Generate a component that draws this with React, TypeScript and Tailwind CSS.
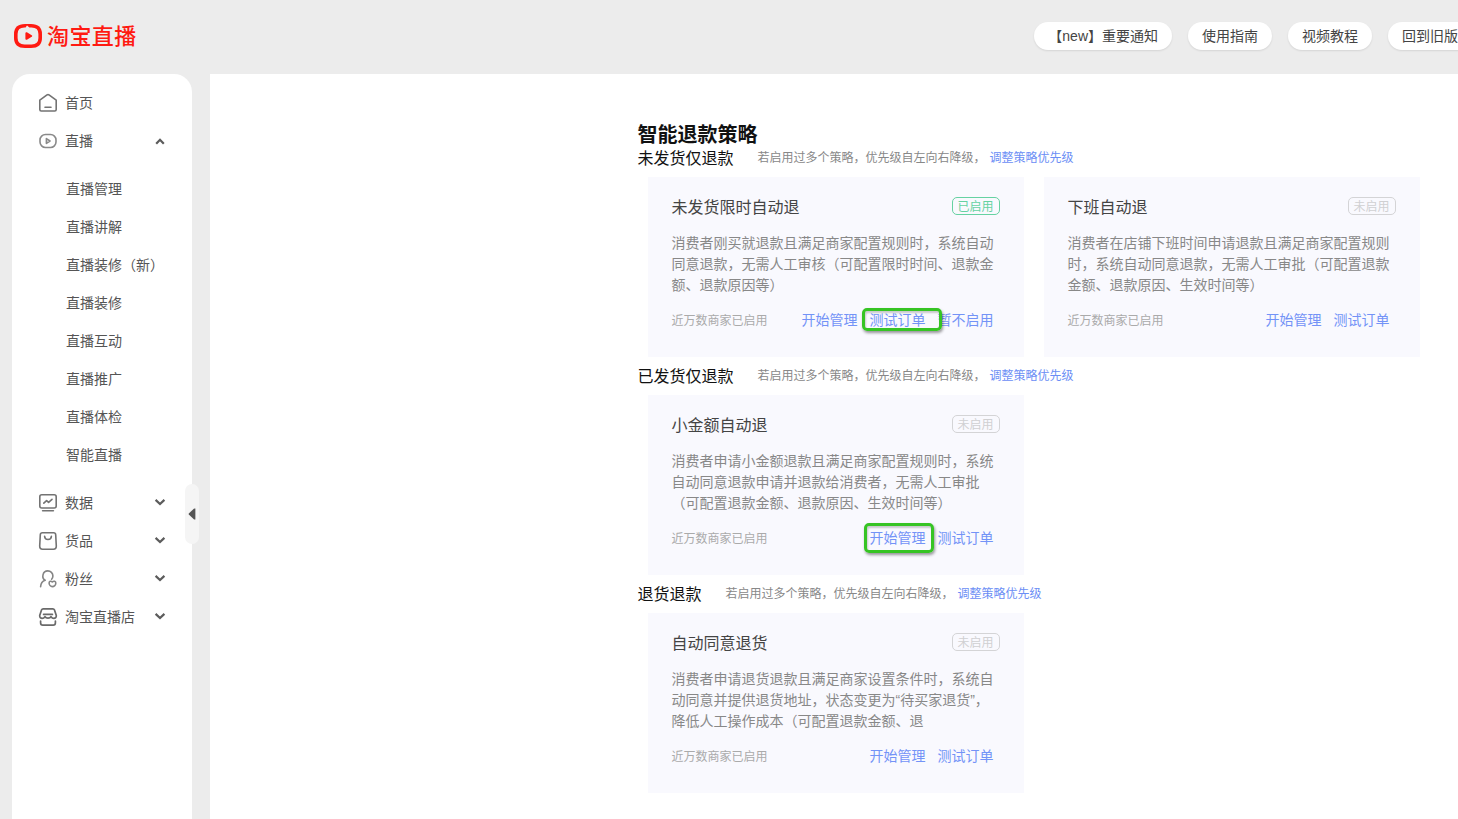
import type { ReactNode } from "react";

const stroke = {
  width: 20,
  height: 20,
  viewBox: "0 0 20 20",
  fill: "none",
  stroke: "#737373",
  strokeWidth: 1.6,
  strokeLinecap: "round" as const,
  strokeLinejoin: "round" as const,
};

const HomeIcon = () => (
  <svg {...stroke}>
    <path d="M1.8 7.2 L9 1.9 Q10 1.3 11 1.9 L18.2 7.2 V16.6 Q18.2 18 16.8 18 H3.2 Q1.8 18 1.8 16.6 Z" />
    <path d="M7 14.2 H13" />
  </svg>
);

const LiveIcon = () => (
  <svg {...stroke} stroke="#8a8a8a">
    <rect x="2" y="3.5" width="16" height="13" rx="5.5" />
    <path d="M8.4 7.6 L12 10 L8.4 12.4 Z" />
  </svg>
);

const DataIcon = () => (
  <svg {...stroke}>
    <rect x="1.8" y="1.8" width="16.4" height="13.2" rx="2" />
    <path d="M5.8 10.2 L8.6 7.6 L10.6 9.4 L14 6.4" />
    <path d="M4.6 17.7 H15.4" />
  </svg>
);

const GoodsIcon = () => (
  <svg {...stroke}>
    <path d="M4.4 1.8 H15.6 Q17.6 1.8 17.7 3.8 L18.3 15 Q18.4 18.2 15.4 18.2 H4.6 Q1.6 18.2 1.7 15 L2.3 3.8 Q2.4 1.8 4.4 1.8 Z" />
    <path d="M6.6 5.2 C6.8 9.6 13.2 9.6 13.4 5.2" />
  </svg>
);

const FansIcon = () => (
  <svg {...stroke} stroke="#858585">
    <path d="M2.6 17.8 C2.8 14 4.6 12 7.2 11.2 C4.8 10 4.6 7.6 5 5.8 C5.6 3.2 7.8 1.9 9.8 1.9 C12.6 1.9 15 4.2 14.9 7 C14.9 8.4 14.4 9.4 13.6 10.2" />
    <path d="M14.3 13 C12.9 11.5 11.1 12.4 11.1 14.1 C11.1 16 12.7 17.6 14.3 17.6 C16.1 17.6 17.8 16 17.8 14.1 C17.8 12.4 15.8 11.5 14.3 13 Z" />
  </svg>
);

const ShopIcon = () => (
  <svg {...stroke} strokeWidth={1.7} stroke="#6a6a6a">
    <path d="M5.2 1.8 H14.8 Q16 1.8 16.4 2.8 L18.3 8.6 C18.4 10.4 17.4 11.4 15.8 11.4 C14.4 11.4 13.6 10.6 13 9.6 C12 11.6 8 11.6 7 9.6 C6.4 10.6 5.6 11.4 4.2 11.4 C2.6 11.4 1.6 10.4 1.7 8.6 L3.6 2.8 Q4 1.8 5.2 1.8 Z" />
    <path d="M5.6 7.4 H14.4" />
    <path d="M2.6 14 V15.8 Q2.6 18.2 4.8 18.2 H15.2 Q17.4 18.2 17.4 15.8 V14" />
  </svg>
);

const Arrow = ({ up }: { up?: boolean }) => (
  <svg width="12" height="12" viewBox="0 0 12 12" fill="none" stroke="#5c5c5c" strokeWidth="2.2">
    <path d={up ? "M2.2 8.8 L6 4.8 L9.8 8.8" : "M1.6 2.9 L6 7.1 L10.4 2.9"} />
  </svg>
);

const liveMenu = [
  "直播管理",
  "直播讲解",
  "直播装修（新）",
  "直播装修",
  "直播互动",
  "直播推广",
  "直播体检",
  "智能直播",
];

const bottomMenu = [
  { title: "数据", icon: <DataIcon /> },
  { title: "货品", icon: <GoodsIcon /> },
  { title: "粉丝", icon: <FansIcon /> },
  { title: "淘宝直播店", icon: <ShopIcon /> },
];

type Action = { text: string; mark?: string };
type CardData = { title: string; enabled?: boolean; desc: string[]; actions: Action[] };

const sections: { title: string; cards: CardData[] }[] = [
  {
    title: "未发货仅退款",
    cards: [
      {
        title: "未发货限时自动退",
        enabled: true,
        desc: [
          "消费者刚买就退款且满足商家配置规则时，系统自动",
          "同意退款，无需人工审核（可配置限时时间、退款金",
          "额、退款原因等）",
        ],
        actions: [
          { text: "开始管理" },
          { text: "测试订单", mark: "-left-[7.5px] -top-0.5 w-20 h-[23px]" },
          { text: "暂不启用" },
        ],
      },
      {
        title: "下班自动退",
        desc: [
          "消费者在店铺下班时间申请退款且满足商家配置规则",
          "时，系统自动同意退款，无需人工审批（可配置退款",
          "金额、退款原因、生效时间等）",
        ],
        actions: [{ text: "开始管理" }, { text: "测试订单" }],
      },
    ],
  },
  {
    title: "已发货仅退款",
    cards: [
      {
        title: "小金额自动退",
        desc: [
          "消费者申请小金额退款且满足商家配置规则时，系统",
          "自动同意退款申请并退款给消费者，无需人工审批",
          "（可配置退款金额、退款原因、生效时间等）",
        ],
        actions: [
          { text: "开始管理", mark: "-left-[5.5px] -top-[5px] w-[70px] h-[30px]" },
          { text: "测试订单" },
        ],
      },
    ],
  },
  {
    title: "退货退款",
    cards: [
      {
        title: "自动同意退货",
        desc: [
          "消费者申请退货退款且满足商家设置条件时，系统自",
          "动同意并提供退货地址，状态变更为“待买家退货”，",
          "降低人工操作成本（可配置退款金额、退",
        ],
        actions: [{ text: "开始管理" }, { text: "测试订单" }],
      },
    ],
  },
];

function MenuRow({ icon, title, up }: { icon: ReactNode; title: string; up?: boolean }) {
  return (
    <div className="flex h-[38px] items-center pl-[26px] pr-[26px]">
      {icon}
      <span className="ml-[7px] flex-1">{title}</span>
      <Arrow up={up} />
    </div>
  );
}

function Card({ card }: { card: CardData }) {
  return (
    <div className="h-[180px] w-[376px] shrink-0 bg-[#f9f9fe] pl-[23.5px] pr-6 pt-5">
      <div className="flex items-start justify-between">
        <h3 className="pt-px text-base leading-5 text-[#444]">{card.title}</h3>
        <span
          className={
            card.enabled
              ? "flex h-[18px] w-12 items-center justify-center rounded-[5px] border border-[#66d2a2] pr-px pt-0.5 text-xs text-[#66d2a2]"
              : "flex h-[18px] w-12 items-center justify-center rounded-[5px] border border-[#d4d4d6] pr-px pt-0.5 text-xs text-[#d0d0d2]"
          }
        >
          {card.enabled ? "已启用" : "未启用"}
        </span>
      </div>
      <div className="mt-[15px] whitespace-nowrap text-sm leading-[21px] text-[#888]">
        {card.desc.map((line) => (
          <p key={line}>{line}</p>
        ))}
      </div>
      <div className="mt-3.5 flex h-5 items-center justify-between pr-[6.5px]">
        <span className="pt-0.5 text-xs text-[#aaa]">近万数商家已启用</span>
        <div className="flex gap-3 text-sm leading-5 text-[#7393f7]">
          {card.actions.map((a) => (
            <a key={a.text} className="relative">
              {a.text}
              {a.mark && (
                <span
                  className={`absolute z-10 rounded-[5px] border-[3px] border-[#36c424] shadow-[1px_2px_3px_rgba(0,0,0,0.4),inset_1px_2px_2px_rgba(0,0,0,0.2)] ${a.mark}`}
                />
              )}
            </a>
          ))}
        </div>
      </div>
    </div>
  );
}

export default function App() {
  return (
    <div className="flex h-[819px] w-full flex-col overflow-hidden bg-[#ececec] font-['Liberation_Sans','Noto_Sans_CJK_SC',sans-serif] text-sm text-[#555]">
      <header className="flex h-[74px] shrink-0 items-center justify-between pl-3.5">
        <div className="flex items-center pb-0.5">
          <svg width="28" height="24" viewBox="0 0 28 24">
            <path
              d="M11 0 H17 Q28 0 28 10 V14 Q28 24 17 24 H11 Q0 24 0 14 V10 Q0 0 11 0 Z"
              fill="#ff1a12"
            />
            <path
              d="M10.5 3.6 H11.6 L13 1.4 L15.4 3.6 H17.5 Q24.4 3.6 24.4 10 V14 Q24.4 20.4 17.5 20.4 H10.5 Q3.6 20.4 3.6 14 V10 Q3.6 3.6 10.5 3.6 Z"
              fill="#ececec"
            />
            <path d="M12.4 9.2 L17.2 12 L12.4 14.8 Z" fill="#ff1a12" stroke="#ff1a12" strokeWidth="2" strokeLinejoin="round" />
          </svg>
          <span className="ml-[5px] pt-px text-[22px] font-medium leading-6 tracking-[0.4px] text-[#ff1a12]">淘宝直播</span>
        </div>
        <div className="-mr-3.5 flex shrink-0 gap-4 pb-0.5">
          {["【new】重要通知", "使用指南", "视频教程", "回到旧版"].map((t) => (
            <a
              key={t}
              className="flex h-7 items-center whitespace-nowrap rounded-full bg-white px-3.5 text-[#444] shadow-[0_1px_2px_rgba(0,0,0,0.1)]"
            >
              {t}
            </a>
          ))}
        </div>
      </header>

      <div className="flex min-h-0 flex-1">
        <aside className="relative ml-3 w-[180px] shrink-0 rounded-t-[18px] bg-white pt-2.5">
          <div className="flex h-[38px] items-center pl-[26px]">
            <HomeIcon />
            <span className="ml-[7px]">首页</span>
          </div>
          <MenuRow icon={<LiveIcon />} title="直播" up />
          <ul className="py-2.5">
            {liveMenu.map((item) => (
              <li key={item} className="flex h-[38px] items-center whitespace-nowrap pl-[54px]">
                {item}
              </li>
            ))}
          </ul>
          {bottomMenu.map((item) => (
            <MenuRow key={item.title} icon={item.icon} title={item.title} />
          ))}
          <div className="absolute -right-[7px] top-[410px] flex h-[60px] w-3.5 items-center justify-center rounded-full bg-[#f5f5f5]">
            <svg width="8" height="12" viewBox="0 0 8 12">
              <path d="M7.4 0.6 V11.4 Q6.6 11.8 5.8 11.2 L0.8 6.6 Q0.3 6 0.8 5.4 L5.8 0.8 Q6.6 0.2 7.4 0.6 Z" fill="#555" />
            </svg>
          </div>
        </aside>

        <main className="ml-[18px] flex-1 bg-white pl-[427.5px] pt-[47px]">
          <h1 className="text-xl font-bold leading-7 text-[#111]">智能退款策略</h1>
          {sections.map((s) => (
            <section key={s.title} className="mb-2.5">
              <div className="flex h-5 items-center whitespace-nowrap text-xs">
                <h2 className="text-base leading-5 text-[#111]">{s.title}</h2>
                <span className="ml-6 pb-0.5 text-[#888]">若启用过多个策略，优先级自左向右降级，</span>
                <a className="ml-1 pb-0.5 text-[#6b8ef5]">调整策略优先级</a>
              </div>
              <div className="ml-[10.5px] mt-2 flex gap-5">
                {s.cards.map((c) => (
                  <Card key={c.title} card={c} />
                ))}
              </div>
            </section>
          ))}
        </main>
      </div>
    </div>
  );
}
